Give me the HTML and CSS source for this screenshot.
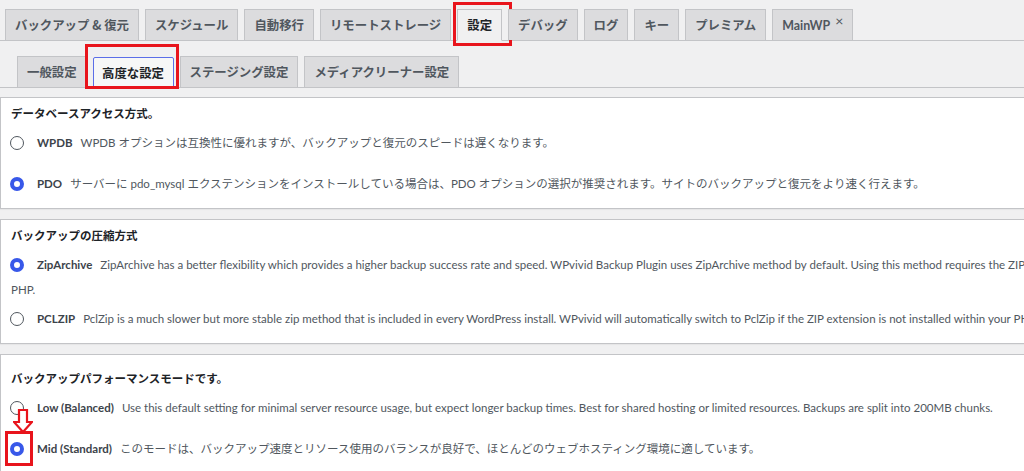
FILE: index.html
```html
<!DOCTYPE html>
<html lang="ja">
<head>
    <meta charset="UTF-8">
    <meta name="viewport" content="width=device-width, initial-scale=1.0">
    <title>WPvivid 設定</title>
    <link rel="stylesheet" href="styles.css">
</head>
<body>
<div class="nav-tabs main-tabs">
    <a class="tab">バックアップ &amp; 復元</a>
    <a class="tab">スケジュール</a>
    <a class="tab">自動移行</a>
    <a class="tab">リモートストレージ</a>
    <a class="tab active marked-main">設定</a>
    <a class="tab">デバッグ</a>
    <a class="tab">ログ</a>
    <a class="tab">キー</a>
    <a class="tab">プレミアム</a>
    <a class="tab tab-mainwp">MainWP<span class="tab-close">×</span></a>
</div>

<div class="nav-tabs sub-tabs">
    <a class="tab">一般設定</a>
    <a class="tab active focused marked-sub">高度な設定</a>
    <a class="tab">ステージング設定</a>
    <a class="tab">メディアクリーナー設定</a>
</div>

<div class="panel">
    <div class="panel-title">データベースアクセス方式。</div>
    <div class="option">
        <label><span class="radio"></span><strong>WPDB</strong></label><span class="desc">WPDB オプションは互換性に優れますが、バックアップと復元のスピードは遅くなります。</span>
    </div>
    <div class="option">
        <label><span class="radio checked"></span><strong>PDO</strong></label><span class="desc">サーバーに pdo_mysql エクステンションをインストールしている場合は、PDO オプションの選択が推奨されます。サイトのバックアップと復元をより速く行えます。</span>
    </div>
</div>

<div class="panel">
    <div class="panel-title">バックアップの圧縮方式</div>
    <div class="option">
        <label><span class="radio checked"></span><strong>ZipArchive</strong></label><span class="desc">ZipArchive has a better flexibility which provides a higher backup success rate and speed. WPvivid Backup Plugin uses ZipArchive method by default. Using this method requires the ZIP extension to be installed within your PHP.</span>
    </div>
    <div class="option compact">
        <label><span class="radio"></span><strong>PCLZIP</strong></label><span class="desc">PclZip is a much slower but more stable zip method that is included in every WordPress install. WPvivid will automatically switch to PclZip if the ZIP extension is not installed within your PHP.</span>
    </div>
</div>

<div class="panel panel-mode">
    <div class="panel-title">バックアップパフォーマンスモードです。</div>
    <div class="option">
        <label><span class="radio"></span><strong>Low (Balanced)</strong></label><span class="desc">Use this default setting for minimal server resource usage, but expect longer backup times. Best for shared hosting or limited resources. Backups are split into 200MB chunks.</span>
    </div>
    <div class="option">
        <label><span class="radio checked"></span><strong>Mid (Standard)</strong></label><span class="desc">このモードは、バックアップ速度とリソース使用のバランスが良好で、ほとんどのウェブホスティング環境に適しています。</span>
    </div>

    <!-- annotation over the screenshot -->
    <svg class="mark-arrow" width="20" height="24" viewBox="0 0 20 24">
        <path d="M6 1 H14 V13 H19 L10 23 L1 13 H6 Z" fill="#fff" stroke="#e8141c" stroke-width="2.2" stroke-linejoin="miter"/>
    </svg>
    <div class="mark-box"></div>
</div>
</body>
</html>
```

FILE: styles.css
```css
html, body {
    overflow: hidden;
}
body {
    margin: 0;
    background-color: #f0f0f1;
    font-family: Lato, "Noto Sans CJK JP", sans-serif;
    font-size: 11.5px;
    color: #3c434a;
}
.nav-tabs {
    display: flex;
    align-items: flex-end;
    border-bottom: 1px solid #c3c4c7;
}
.main-tabs {
    padding: 9px 0 0 5px;
}
.sub-tabs {
    padding: 15px 0 0 17px;
}
.tab {
    position: relative;
    height: 21px;
    margin-right: 6px;
    padding: 5px 9px 4px;
    border: 1px solid #c3c4c7;
    border-bottom: none;
    background-color: #dcdcde;
    color: #50575e;
    font-family: "Noto Sans CJK JP", sans-serif;
    font-size: 12.4px;
    font-weight: 700;
    line-height: 21px;
    white-space: nowrap;
}
.tab.active {
    background-color: #f0f0f1;
    color: #1d2327;
    border-bottom: 1px solid #f0f0f1;
    margin-bottom: -1px;
}
.tab.focused {
    background-color: #f6f7f7;
    border: 1.5px solid #5b6ee8;
    border-radius: 2px;
    padding: 4.5px 8.5px 3.5px;
}
.tab-mainwp {
    font-family: Lato, sans-serif;
    font-size: 12.4px;
    font-weight: 700;
    padding-right: 9px;
}
.tab-close {
    font-size: 14px;
    font-weight: 400;
    margin-left: 5px;
    vertical-align: 4px;
    line-height: 10px;
}
.marked-main::after,
.marked-sub::after,
.mark-box {
    content: "";
    position: absolute;
    border: 3px solid #e8141c;
}
.marked-main::after {
    left: -5px;
    right: -11px;
    top: -8px;
    bottom: -6px;
}
.marked-sub::after {
    left: -9px;
    right: -6px;
    top: -14px;
    bottom: -2px;
}
.panel {
    width: 1208px;
    margin: 9px 0 10px;
    padding: 6px 10px 12.5px;
    background-color: #fff;
    border: 1px solid #c3c4c7;
    box-shadow: 0 1px 1px rgba(0, 0, 0, 0.04);
}
.panel-mode {
    position: relative;
    padding-top: 14px;
}
.panel-title {
    font-weight: 700;
    line-height: 20px;
    color: #1d2327;
}
.option {
    margin-top: 5.5px;
    line-height: 25px;
}
.option + .option {
    margin-top: 16px;
}
.option.compact {
    margin-top: 4px;
}
.option label strong {
    color: #3c434a;
}
.desc {
    margin-left: 8px;
    color: #50575e;
}
.radio {
    display: inline-block;
    box-sizing: border-box;
    width: 14px;
    height: 14px;
    margin: 0 13px 0 -1px;
    border: 1.3px solid #50575e;
    border-radius: 50%;
    background-color: #fff;
    vertical-align: -3px;
}
.radio.checked {
    border: 4px solid #3858e9;
}
.mark-arrow {
    position: absolute;
    left: 12px;
    top: 54px;
}
.mark-box {
    left: 4px;
    top: 76px;
    width: 22px;
    height: 29px;
}
```
